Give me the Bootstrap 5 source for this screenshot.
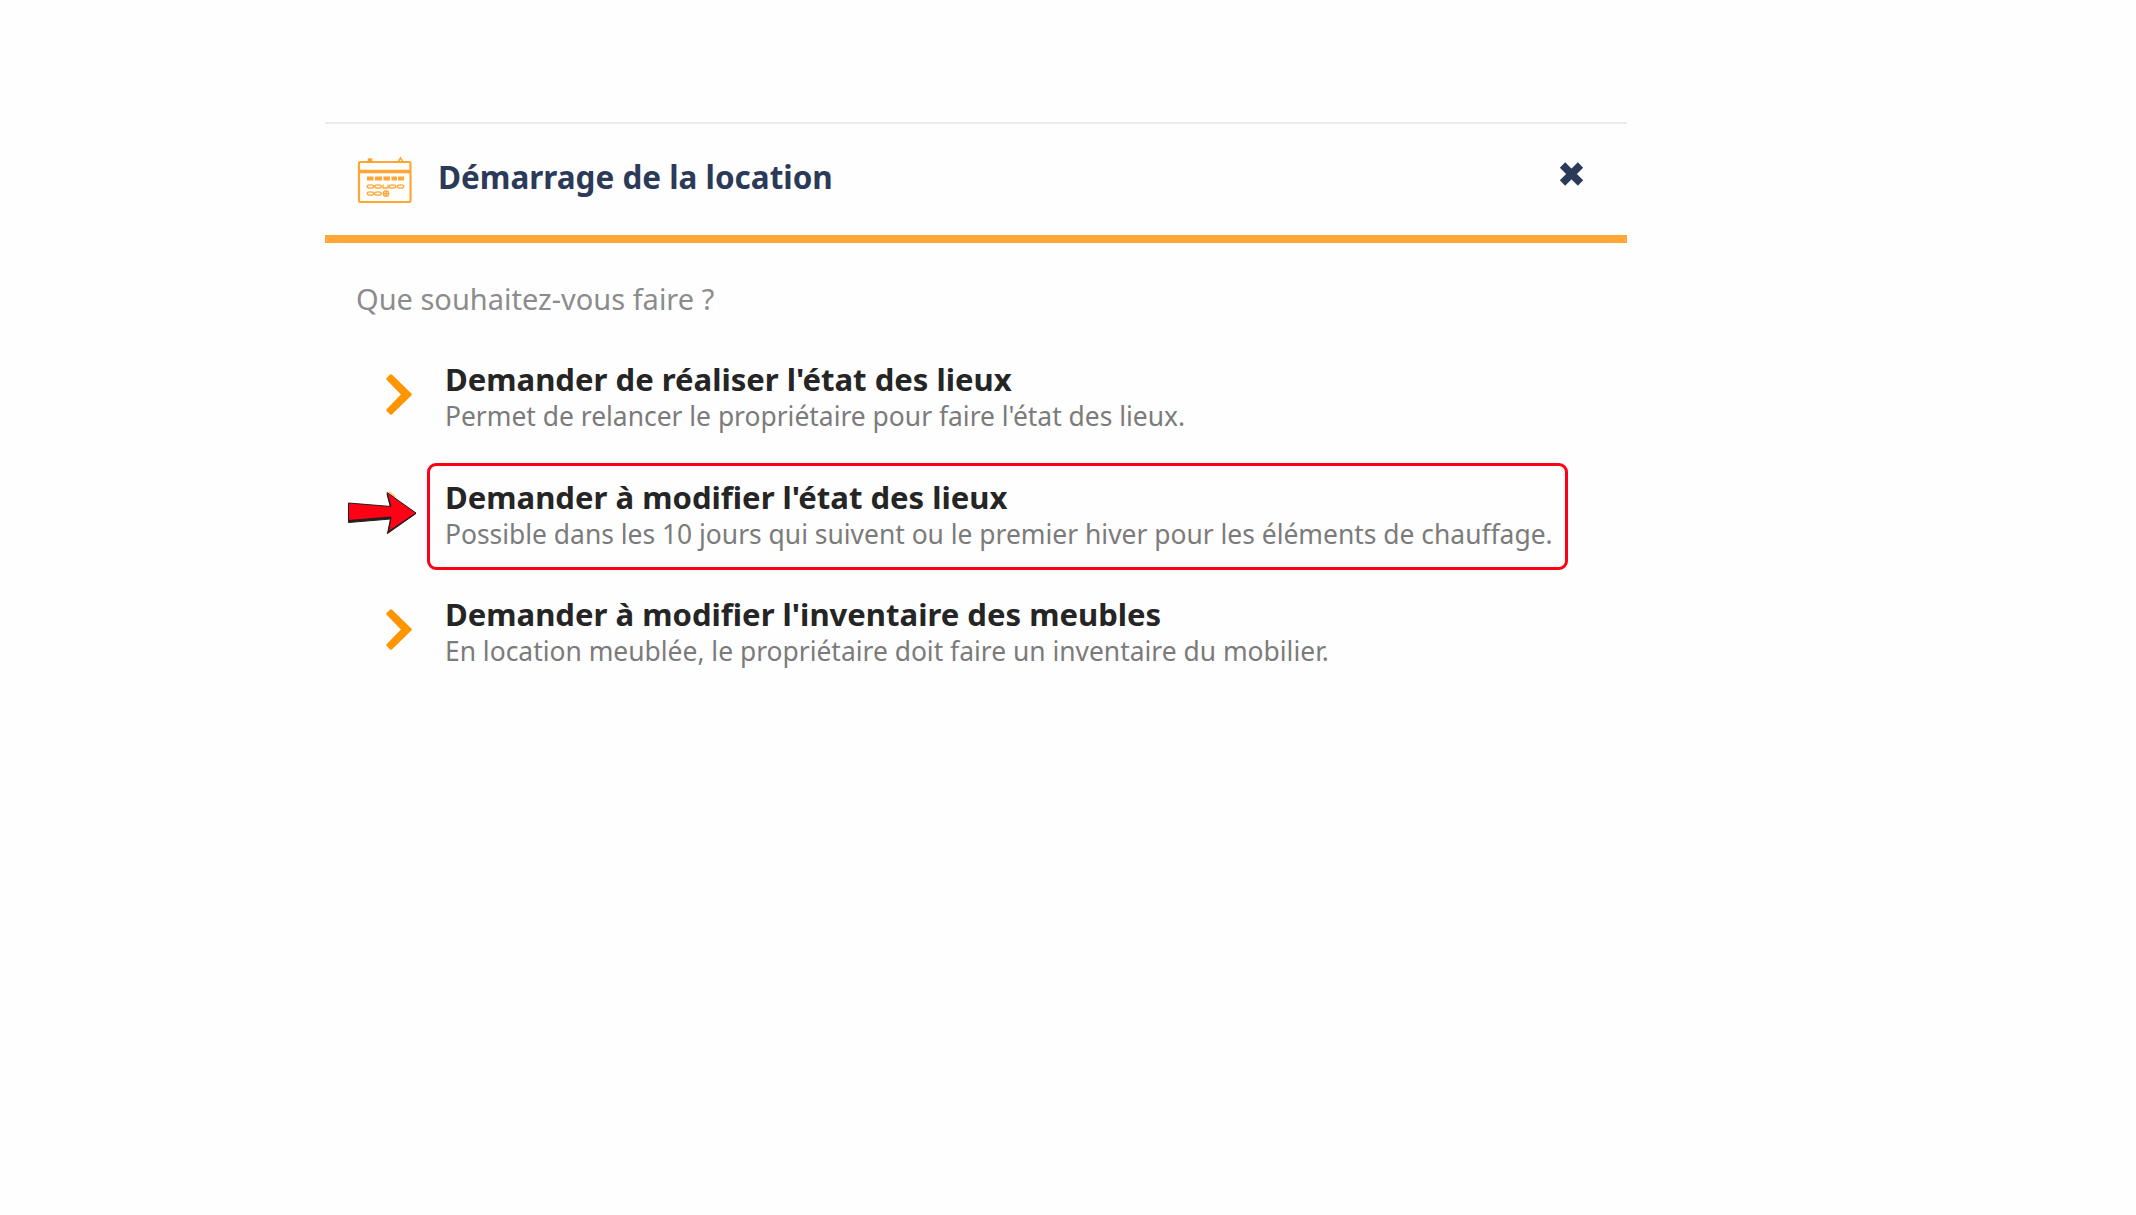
<!DOCTYPE html>
<html lang="fr">
<head>
  <meta charset="UTF-8" />
  <meta name="viewport" content="width=device-width, initial-scale=1.0"/>
  <title>Démarrage de la location</title>
  <link href="https://cdn.jsdelivr.net/npm/bootstrap@5.3.3/dist/css/bootstrap.min.css" rel="stylesheet"/>
  <style>
    body {
      background-color: #fefefe;
      color: #252525;
      font-family: "Noto Sans", "Open Sans", sans-serif;
    }

    .panel {
      width: 1302px;
      margin: 122px 0 0 325px;
      border-top: 2px solid #ececec;
    }

    .panel-header {
      height: 119px;
      padding: 0 42px 0 32px;
      border-bottom: 8px solid #ffa736;
    }

    .panel-title {
      color: #2b3a58;
      font-size: 31.45px;
      font-weight: 700;
      line-height: 42px;
      margin-left: 25px;
      padding-bottom: 5px;
    }

    .btn-dismiss {
      color: #2b3a58;
      line-height: 0;
      margin-bottom: 11px;
    }

    .panel-body {
      padding: 34px 0 0 31px;
    }

    .question {
      color: #8c8c8c;
      font-size: 29px;
      line-height: 44px;
      margin-bottom: 39px;
    }

    .choices {
      gap: 44.6px;
    }

    .choice {
      color: inherit;
      height: 73px;
      padding-left: 29px;
    }

    .choice-arrow {
      width: 60px;
      padding-bottom: 4px;
    }

    .choice-title {
      font-size: 31.07px;
      font-weight: 700;
      line-height: 39px;
    }

    .choice-text {
      color: #7b7b7b;
      font-size: 26.42px;
      line-height: 34px;
    }

    /* frame and pointer laid over the highlighted choice */
    .highlight-frame {
      inset: -15px -15px -19px -18px;
      border: 3px solid #ff0015;
      border-radius: 9px;
    }

    .highlight-pointer {
      left: -9px;
      top: 13px;
    }
  </style>
</head>
<body>

  <div class="panel">
    <div class="panel-header d-flex align-items-center">
      <svg width="56" height="48" viewBox="0 0 56 48" fill="none" stroke="#ffa634" stroke-width="2.200">
        <rect x="2" y="6" width="51.500" height="40" rx="1"/>
        <path d="M2 15.500h51.500" stroke-width="3.500"/>
        <path d="M11.500 6v-3h3v3z" fill="#ff9d1e" stroke-width="1.500"/>
        <path d="M41 6l2.500-4 2.500 4" stroke-width="1.500"/>
        <path d="M10 22.500h6.500M18 22.500h7M26.500 22.500h6.500M34.500 22.500h5.500M41 22.500h6" stroke-width="4"/>
        <g stroke-width="1.300">
          <ellipse cx="13.500" cy="30.500" rx="3.300" ry="1.700"/>
          <ellipse cx="21" cy="30.500" rx="3.300" ry="1.700"/>
          <path d="M26 28.500v3.500h5v-3.500"/>
          <ellipse cx="35.500" cy="30.500" rx="3.300" ry="1.700"/>
          <ellipse cx="43.500" cy="30.500" rx="3.300" ry="1.700"/>
          <ellipse cx="13.500" cy="37.500" rx="3.300" ry="1.700"/>
          <ellipse cx="21" cy="37.500" rx="3.300" ry="1.700"/>
          <circle cx="29" cy="37.500" r="2.700"/>
          <path d="M26 37.500h6M29 34.500v6"/>
        </g>
      </svg>
      <h1 class="panel-title mb-0">Démarrage de la location</h1>
      <button type="button" class="btn-dismiss border-0 bg-transparent p-0 ms-auto" aria-label="Fermer">
        <svg width="26" height="26" viewBox="0 0 26 26" stroke="currentColor" stroke-width="7.500">
          <path d="M3.500 4l18 18M21.500 4L3.500 22"/>
        </svg>
      </button>
    </div>

    <div class="panel-body">
      <p class="question">Que souhaitez-vous faire ?</p>

      <div class="choices d-flex flex-column align-items-start">
        <a href="#" class="choice d-flex text-decoration-none">
          <div class="choice-arrow d-flex align-items-center">
            <svg width="28" height="42" viewBox="0 0 28 42" fill="#ff9500" stroke="#ff9500" stroke-width="2.500" stroke-linejoin="round">
              <path d="M2.500 5L6 1.500 25.500 20.500 6 39.500 2.500 36 17.500 20.500z"/>
            </svg>
          </div>
          <div>
            <div class="choice-title">Demander de réaliser l'état des lieux</div>
            <div class="choice-text">Permet de relancer le propriétaire pour faire l'état des lieux.</div>
          </div>
        </a>

        <a href="#" class="choice d-flex text-decoration-none position-relative">
          <div class="choice-arrow"></div>
          <div class="position-relative">
            <div class="choice-title">Demander à modifier l'état des lieux</div>
            <div class="choice-text">Possible dans les 10 jours qui suivent ou le premier hiver pour les éléments de chauffage.</div>
            <div class="highlight-frame position-absolute"></div>
          </div>
          <svg class="highlight-pointer position-absolute" width="72" height="46" viewBox="0 0 72 46">
            <path d="M42 1l6 5M39.500 42.500l3-2" stroke="#ffc064" stroke-width="2"/>
            <path d="M1.500 13L43.500 16.500 40 3 69 22.500 40.500 42.500 43.500 28 1.500 31.500z" fill="#231f20" stroke="#231f20" stroke-width="1"/>
            <path d="M1.500 12L44 15.500 40 1.500 69 22 41.500 40.500 44 26 1.500 29.500z" fill="#ff0015" stroke="#231f20" stroke-width="1"/>
          </svg>
        </a>

        <a href="#" class="choice d-flex text-decoration-none">
          <div class="choice-arrow d-flex align-items-center">
            <svg width="28" height="42" viewBox="0 0 28 42" fill="#ff9500" stroke="#ff9500" stroke-width="2.500" stroke-linejoin="round">
              <path d="M2.500 5L6 1.500 25.500 20.500 6 39.500 2.500 36 17.500 20.500z"/>
            </svg>
          </div>
          <div>
            <div class="choice-title">Demander à modifier l'inventaire des meubles</div>
            <div class="choice-text">En location meublée, le propriétaire doit faire un inventaire du mobilier.</div>
          </div>
        </a>
      </div>
    </div>
  </div>

<script src="https://cdn.jsdelivr.net/npm/bootstrap@5.3.3/dist/js/bootstrap.bundle.min.js"></script>
</body>
</html>
